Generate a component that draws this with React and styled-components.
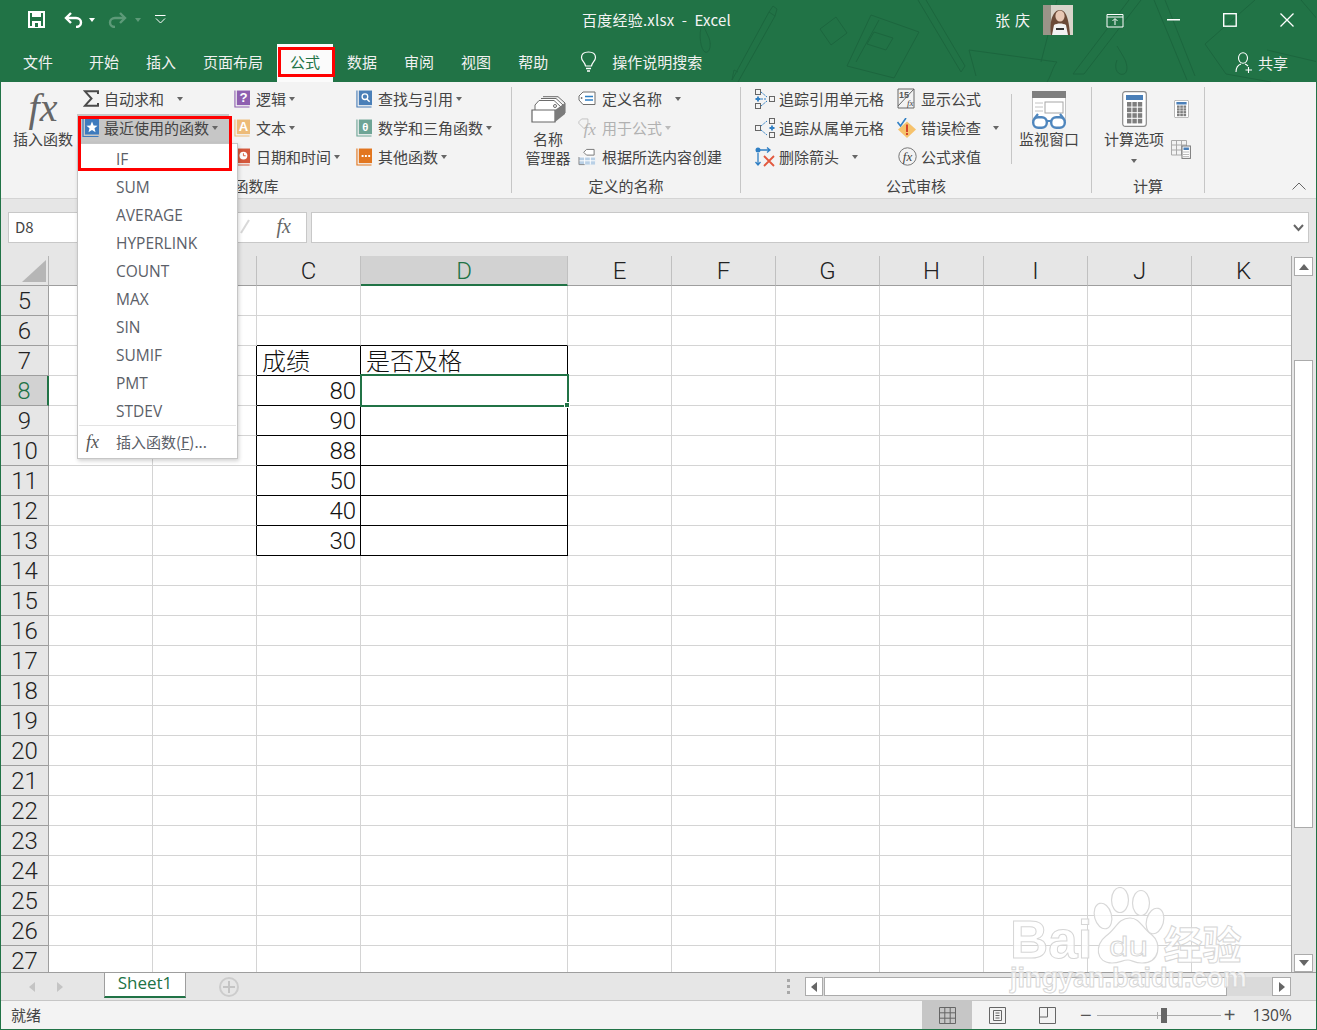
import React from "react";
import styled, { createGlobalStyle } from "styled-components";

const UI = `"Noto Sans CJK SC", "Noto Sans", sans-serif`;
const SHEETFONT = `Roboto, "Noto Sans CJK SC", sans-serif`;
const GREEN = "#217346";
const COLS = "48px 104px 104px 104px 207px 104px 104px 104px 104px 104px 104px 104px";

const Global = createGlobalStyle`
  html, body { margin: 0; padding: 0; background: #fff; }
  * { box-sizing: border-box; }
  #root { width: 1317px; height: 1030px; }
`;

const Window = styled.div`
  position: relative; width: 1317px; height: 1030px; overflow: hidden;
  display: flex; flex-direction: column;
  border-left: 1px solid ${GREEN}; border-right: 1px solid ${GREEN}; border-bottom: 1px solid ${GREEN};
  font-family: ${UI}; color: #444; background: #e6e6e6;
`;
const Header = styled.header`position: relative; height: 82px; flex: none; background: ${GREEN}; color: #fff;`;
const Doodles = styled.svg`position: absolute; left: 0; top: 0; pointer-events: none;`;
const TitleBar = styled.div`
  position: relative; height: 44px; display: grid; grid-template-columns: 1fr auto 1fr; padding-bottom: 5px; align-items: center;
`;
const Qat = styled.div`display: flex; align-items: center; padding-left: 27px;`;
const QatItem = styled.span`display: inline-flex; align-items: center; margin-left: ${p => p.$ml || 0}px;`;
const Caret = styled.i`
  display: inline-block; flex: none; width: 0; height: 0; margin-left: ${p => p.$ml ?? 3}px; margin-top: ${p => p.$mt || 0}px;
  border-left: 3.5px solid transparent; border-right: 3.5px solid transparent;
  border-top: 4px solid ${p => p.$c || "#666"};
`;
const Title = styled.div`font-size: 15px; line-height: 20px; color: #f4f4f4; white-space: pre; letter-spacing: .25px; margin-left: -4px;`;
const Controls = styled.div`display: flex; align-items: center; justify-content: flex-end;`;
const UserName = styled.span`font-size: 15px; letter-spacing: 5px; line-height: 20px; margin-right: 8px; color: #f4f4f4;`;
const Ctl = styled.span`display: inline-flex; justify-content: center; width: ${p => p.$w}px; margin-left: ${p => p.$ml || 0}px;`;
const TabBar = styled.nav`position: relative; height: 38px; display: flex; align-items: stretch; padding-left: 9px; gap: 1px;`;
const Tab = styled.div`
  padding: 0 13px; font-size: 15px; line-height: 36px; margin-right: ${p => p.$mr || 0}px;
  color: ${p => (p.$active ? GREEN : "#f1f1f1")}; background: ${p => (p.$active ? "#fbfbfb" : "transparent")};
`;
const Search = styled.div`display: flex; align-items: center; gap: 15px; margin-left: 18px; font-size: 15px; color: #f1f1f1; height: 35px;`;
const Share = styled.div`display: flex; align-items: center; gap: 5px; margin-left: auto; padding-right: 28px; font-size: 15px; height: 37px; color: #f1f1f1;`;

const Ribbon = styled.section`display: flex; flex: none; height: 117px; padding-top: 3px; background: #f3f3f3; border-bottom: 1px solid #d4d4d4;`;
const Group = styled.div`display: flex; flex-direction: column; width: ${p => p.$w}px; flex: none;`;
const GroupBody = styled.div`display: flex; height: 90px; padding-left: ${p => p.$pl || 0}px;`;
const GroupLabel = styled.div`font-size: 15px; line-height: 20px; text-align: center; margin-top: 1px; white-space: nowrap;`;
const Divider = styled.div`flex: none; width: 1px; height: ${p => p.$h || 106}px; margin-top: ${p => p.$mt || 2}px; background: #c6c6c6;`;
const Column = styled.div`display: flex; flex-direction: column; flex: none; width: ${p => p.$w}px;`;
const Item = styled.div`
  display: flex; align-items: center; height: 29px; padding-left: ${p => p.$pl ?? 5}px; padding-bottom: 2px;
  background: ${p => (p.$active ? "#c6c6c6" : "transparent")};
  color: ${p => (p.$off ? "#b1b1b1" : "#444")}; font-size: 15px; white-space: nowrap;
`;
const IconBox = styled.span`display: inline-flex; justify-content: center; align-items: center; flex: none; width: ${p => p.$w || 17}px; margin-right: ${p => p.$g ?? 5}px;`;
const BigButton = styled.div`
  display: flex; flex-direction: column; align-items: center; flex: none; width: ${p => p.$w}px;
  font-size: 15px; line-height: 19px; text-align: center; color: #444;
`;
const BigIcon = styled.div`height: 44px; padding-top: ${p => p.$pt || 0}px; display: flex; align-items: center; justify-content: center; flex: none;`;
const FxGlyph = styled.span`
  font-family: "Liberation Serif", serif; font-style: italic; color: ${p => p.$c || "#666"};
  font-size: ${p => p.$s}px; line-height: 1; letter-spacing: ${p => p.$ls || 0}px;
`;
const SmallCol = styled.div`display: flex; flex-direction: column; align-items: center; flex: none; width: ${p => p.$w}px; padding-top: ${p => p.$pt}px; gap: ${p => p.$g}px;`;
const Collapse = styled.div`margin-left: auto; margin-right: 10px; align-self: flex-end; margin-bottom: 3px;`;

const FormulaBar = styled.div`flex: none; height: 57px; display: flex; padding: 13px 7px 0 7px; gap: 4px;`;
const Field = styled.div`
  height: 31px; background: #fff; border: 1px solid #c8c8c8; display: flex; align-items: center;
  width: ${p => p.$w ? p.$w + "px" : "auto"}; flex: ${p => (p.$w ? "none" : 1)};
`;
const NameBox = styled(Field)`padding: 0 0 3px 6px; font-size: 15px; color: #444;`;
const FxBox = styled(Field)`justify-content: flex-end; padding: 0 15px 3px 0; gap: 27px;`;
const FormulaInput = styled(Field)`justify-content: flex-end; padding-right: 4px;`;

const Sheet = styled.div`flex: 1; display: flex; min-height: 0;`;
const GridPane = styled.div`width: 1291px; flex: none; overflow: hidden; background: #fff; border-right: 1px solid #a8a8a8;`;
const ColHeadRow = styled.div`display: grid; grid-template-columns: ${COLS}; grid-template-rows: 30px; height: 30px; background: #e6e6e6;`;
const Corner = styled.div`display: flex; align-items: flex-end; justify-content: flex-end; padding: 0 2px 3px 0; border-right: 1px solid #b5b5b5; border-bottom: 1px solid #9e9e9e;`;
const ColHead = styled.div`
  text-align: center; font-family: ${SHEETFONT}; font-size: 24px; line-height: 27px; padding-top: 2px; font-weight: 300; overflow: hidden;
  color: ${p => (p.$sel ? GREEN : "#222")}; background: ${p => (p.$sel ? "#d2d2d2" : "#e6e6e6")};
  border-right: 1px solid #c0c0c0;
  border-bottom: ${p => (p.$sel ? `2px solid ${GREEN}` : "1px solid #9e9e9e")};
`;
const Row = styled.div`display: grid; grid-template-columns: ${COLS}; grid-template-rows: 30px; height: 30px;`;
const RowHead = styled.div`
  text-align: center; font-family: ${SHEETFONT}; font-size: 24px; line-height: 27px; padding-top: 2px; font-weight: 300;
  color: ${p => (p.$sel ? GREEN : "#222")}; background: ${p => (p.$sel ? "#d2d2d2" : "#e6e6e6")};
  border-right: ${p => (p.$sel ? `2px solid ${GREEN}` : "1px solid #9e9e9e")};
  border-bottom: 1px solid #9e9e9e;
`;
const Cell = styled.div`
  position: relative; font-family: ${p => (p.$num ? SHEETFONT : UI)}; font-size: 24px; line-height: 27px; color: #111; font-weight: 300; white-space: nowrap;
  padding: ${p => (p.$num ? 2 : 0)}px 4px 0 5px; text-align: ${p => (p.$num ? "right" : "left")};
  border-right: 1px solid ${p => (p.$rb ? "#000" : "#d4d4d4")};
  border-bottom: 1px solid ${p => (p.$bb ? "#000" : "#d4d4d4")};
`;
const Selection = styled.div`position: absolute; left: -1px; right: -2px; top: -2px; bottom: -2px; border: 2px solid ${GREEN}; z-index: 2;`;
const Handle = styled.div`position: absolute; right: -3px; bottom: -3px; width: 6px; height: 6px; background: ${GREEN}; border: 1px solid #fff;`;

const VScroll = styled.div`flex: 1; display: flex; flex-direction: column; padding: 1px 3px 0 2px; background: #e6e6e6;`;
const ScrollBtn = styled.div`
  flex: none; display: flex; align-items: center; justify-content: center; background: #fff; border: 1px solid #ababab;
  width: ${p => p.$w}px; height: ${p => p.$h}px; margin-top: ${p => p.$mt || 0}px; margin-left: ${p => p.$ml || 0}px;
`;
const VThumb = styled.div`flex: none; height: 468px; margin-top: 84px; background: #fff; border: 1px solid #ababab; width: 19px;`;
const Tri = styled.i`
  width: 0; height: 0;
  ${p => p.$d === "up" && "border-left:5px solid transparent;border-right:5px solid transparent;border-bottom:6px solid #666;"}
  ${p => p.$d === "down" && "border-left:5px solid transparent;border-right:5px solid transparent;border-top:6px solid #666;"}
  ${p => p.$d === "left" && `border-top:5px solid transparent;border-bottom:5px solid transparent;border-right:6px solid ${p.$c || "#666"};`}
  ${p => p.$d === "right" && `border-top:5px solid transparent;border-bottom:5px solid transparent;border-left:6px solid ${p.$c || "#666"};`}
`;

const SheetBar = styled.div`flex: none; height: 29px; display: flex; align-items: flex-start; background: #e6e6e6; border-top: 1px solid #9e9e9e; border-bottom: 1px solid #c6c6c6;`;
const SheetNav = styled.div`width: 103px; height: 27px; flex: none; display: flex; align-items: center; gap: 22px; padding-left: 28px;`;
const SheetTab = styled.div`
  flex: none; width: 82px; height: 25px; background: #fff; color: ${GREEN}; font-size: 17px; line-height: 19px; text-align: center;
  border-left: 1px solid #9e9e9e; border-right: 1px solid #9e9e9e; border-bottom: 2px solid ${GREEN};
  font-family: "Open Sans", ${UI};
`;
const AddSheet = styled.div`
  flex: none; width: 20px; height: 20px; margin: 4px 0 0 33px; border-radius: 50%; border: 2px solid #ccc;
  color: #c4c4c4; display: flex; align-items: center; justify-content: center;
`;
const Dots = styled.div`margin: 6px 0 0 auto; display: flex; flex-direction: column; gap: 3px;`;
const Dot = styled.i`width: 3px; height: 3px; background: #a8a8a8;`;
const HScroll = styled.div`flex: none; width: 486px; height: 19px; margin: 4px 25px 0 15px; display: flex; background: #dadada;`;
const HThumb = styled.div`width: 403px; height: 19px; margin-left: 1px; background: #fff; border: 1px solid #ababab; flex: none;`;

const StatusBar = styled.footer`flex: none; height: 28px; display: flex; align-items: center; background: #f3f3f3; padding-left: 10px; font-size: 15px; color: #444;`;
const StatusText = styled.span`padding-bottom: 2px;`;
const ViewBtn = styled.div`
  flex: none; width: 50px; height: 28px; display: flex; align-items: center; justify-content: center;
  background: ${p => (p.$active ? "#c6c6c6" : "transparent")}; margin-left: ${p => p.$ml || 0}px;
`;
const ZoomSign = styled.span`font-family: "Liberation Sans", sans-serif; font-size: 20px; font-weight: 300; color: #555; line-height: 20px; margin-left: ${p => p.$ml}px;`;
const Slider = styled.div`position: relative; flex: none; width: 124px; height: 1px; background: #aaa; margin-left: 5px;`;
const SliderThumb = styled.i`position: absolute; left: 64px; top: -7px; width: 6px; height: 15px; background: #666;`;
const SliderTick = styled.i`position: absolute; left: 60px; top: -3px; width: 1px; height: 7px; background: #aaa;`;
const ZoomText = styled.span`font-family: "Open Sans", sans-serif; font-size: 15.5px; color: #444; margin-left: 17px;`;

const Menu = styled.div`
  position: absolute; left: 76px; top: 143px; width: 161px; height: 316px; z-index: 5; background: #fff;
  border: 1px solid #c6c6c6; box-shadow: 1px 2px 4px rgba(0,0,0,.18); padding-top: 1px;
`;
const MenuItem = styled.div`height: 28px; padding-left: 38px; font-family: "Open Sans", sans-serif; font-size: 15.5px; line-height: 28px; color: #5b6068;`;
const MenuSep = styled.div`height: 1px; background: #e3e3e3; margin: 0 1px;`;
const MenuFoot = styled.div`display: flex; align-items: center; height: 32px; padding: 0 0 2px 8px; font-size: 15px; color: #5b6068; white-space: nowrap;`;
const FootIcon = styled.span`width: 30px; flex: none;`;
const Red = styled.div`
  position: absolute; z-index: 8; border: 3px solid #f00;
  left: ${p => p.$x}px; top: ${p => p.$y}px; width: ${p => p.$w}px; height: ${p => p.$h}px;
`;

const Watermark = styled.div`position: absolute; left: 1009px; top: 887px; z-index: 6; width: 240px; pointer-events: none;`;
const MarkTop = styled.div`display: flex; align-items: flex-end; height: 78px;`;
const MarkWord = styled.span`
  font-family: "Liberation Sans", sans-serif; font-weight: 700; font-size: ${p => p.$s}px; line-height: 1; display: block;
  color: rgba(255,255,255,.72); -webkit-text-stroke: 1px #d6d6d6;
  margin-bottom: ${p => p.$mb || 0}px; white-space: nowrap;
`;
const MarkCn = styled(MarkWord)`font-family: "Noto Sans CJK SC", sans-serif; margin-left: -5px;`;

const Doodle = () => (
  <Doodles width="1317" height="82" fill="none" stroke="#1c663e" strokeWidth="1">
    <path d="M731 80L768 12L774 16L737 82M731 80L733 70L737 72M768 12L772 6L776 9L774 16" />
    <path d="M701 24C697 35 700 50 704 52C708 54 711 46 708 38L703 27" />
    <path d="M819 29L835 17L846 33L830 45Z" />
    <path d="M846 66L870 15L918 32L893 78ZM855 62L878 20M873 32L892 38L885 50L866 44Z" />
    <path d="M917 0L960 72L964 66L925 0" />
    <path d="M968 50L1056 62C1052 66 1050 76 1046 82M1056 0L1040 62M968 50L975 76" />
    <path d="M1075 70L1128 0M1083 74L1140 0M1075 70L1072 74L1083 74" />
    <path d="M1116 60C1112 70 1118 76 1123 74C1128 72 1126 62 1122 56L1116 46" />
    <path d="M1153 0L1186 80M1164 0L1194 76" />
    <path d="M1204 44L1254 0M1204 44L1225 74L1270 82M1300 0L1317 20M1266 50L1317 62" />
  </Doodles>
);

const SaveIcon = () => (
  <svg width="17" height="17" viewBox="0 0 17 17" fill="none">
    <path d="M1 1H16V16H1Z" stroke="#fff" strokeWidth="2" />
    <rect x="4" y="1" width="9" height="5" fill="#fff" />
    <rect x="4" y="10" width="9" height="6" fill="#fff" />
    <rect x="7" y="12" width="3" height="4" fill={GREEN} />
  </svg>
);
const UndoIcon = ({ c, flip }) => (
  <svg width="19" height="16" viewBox="0 0 19 16" fill="none" style={flip ? { transform: "scaleX(-1)" } : undefined}>
    <path d="M3 6H12C15 6 17 8 17 10.5C17 13 15 15 12 15" stroke={c} strokeWidth="2.4" />
    <path d="M7 1L2 6L7 11" stroke={c} strokeWidth="2.4" />
  </svg>
);
const CustomizeIcon = () => (
  <svg width="11" height="9" viewBox="0 0 11 9" fill="none" stroke="#fff"><path d="M0 .5H10.5" /><path d="M1 3.5L5.5 8L10 3.5" /></svg>
);
const Avatar = () => (
  <svg width="30" height="30" viewBox="0 0 30 30">
    <rect width="30" height="30" fill="#d9d4ca" />
    <rect width="8" height="30" fill="#9a9488" />
    <path d="M8 30C6 16 10 5 17 5C24 5 26 17 27 30H8Z" fill="#6b4a38" />
    <ellipse cx="17" cy="11" rx="4.6" ry="5.6" fill="#e8c8b4" />
    <path d="M9 30L11 20C14 18 20 18 23 20L25 30Z" fill="#f2f2f2" />
    <rect x="13" y="23" width="8" height="2" fill="#333" />
  </svg>
);
const RibbonDisp = () => (
  <svg width="18" height="16" viewBox="0 0 18 16" fill="none" stroke="#fff"><path d="M1 2.5H17V15H1ZM1 5H17" /><path d="M9 13V7M6.5 9L9 6.5L11.5 9" /></svg>
);
const MinIcon = () => <svg width="13" height="2"><rect width="13" height="1.5" fill="#fff" /></svg>;
const MaxIcon = () => <svg width="14" height="14" fill="none" stroke="#fff"><rect x=".7" y=".7" width="12.5" height="12.5" strokeWidth="1.4" /></svg>;
const CloseIcon = () => <svg width="14" height="14" stroke="#fff" strokeWidth="1.3"><path d="M.5.5L13.5 13.5M13.5.5L.5 13.5" /></svg>;
const Bulb = () => (
  <svg width="17" height="22" viewBox="0 0 17 22" fill="none" stroke="#fff" strokeWidth="1.2">
    <path d="M5.5 15C5 11 1.5 10 1.5 6.5C1.5 3 4.5 1 8.5 1C12.5 1 15.5 3 15.5 6.5C15.5 10 12 11 11.5 15Z" />
    <path d="M6 17.5H11M7 20H10" strokeWidth="1.6" />
  </svg>
);
const Person = () => (
  <svg width="18" height="21" viewBox="0 0 18 21" fill="none" stroke="#fff" strokeWidth="1.1">
    <ellipse cx="8" cy="6" rx="4.5" ry="5.3" /><path d="M1 20C1 15 3 13 6 12M10 12C11 12.3 12 13 13 14" /><path d="M13.5 15V21M10.5 18H17" />
  </svg>
);
const Sigma = () => <svg width="16" height="17" viewBox="0 0 16 17" fill="none" stroke="#4a4a4a" strokeWidth="2"><path d="M15 4V1.3H2L8.5 8.5L2 15.7H15V13" /></svg>;
const Book = ({ c, children }) => (
  <svg width="17" height="20" viewBox="0 0 17 20" fill="none">
    <path d="M1 1V18.5H16.5" stroke={c} strokeWidth="1.2" />
    <rect x="3" y="1" width="14" height="15.5" fill={c} />
    {children}
  </svg>
);
const BookText = ({ children, y = 13.5, s = 14 }) => (
  <text x="10" y={y} fontFamily="Liberation Sans" fontWeight="700" fontSize={s} fill="#fff" textAnchor="middle">{children}</text>
);
const Tag = () => (
  <svg width="18" height="15" viewBox="0 0 18 15" fill="none">
    <path d="M5 1H17V13.5H5L1 9V5Z" stroke="#6f6f6f" fill="#fff" />
    <path d="M7 5.5H15M7 9H15" stroke="#2f7fc4" strokeWidth="1.3" /><circle cx="3.6" cy="7" r=".9" fill="#6f6f6f" />
  </svg>
);
const FxTag = () => (
  <svg width="20" height="21" viewBox="0 0 20 21" fill="none">
    <path d="M1 4L4 1H11V8L7 12L1 6Z" stroke="#bdbdbd" />
    <text x="6" y="19" fontFamily="Liberation Serif" fontStyle="italic" fontSize="19" fill="#b4b4b4">fx</text>
  </svg>
);
const FromSel = () => (
  <svg width="19" height="18" viewBox="0 0 19 18" fill="none">
    <path d="M6 4L9 1H17V7H9Z" stroke="#777" fill="#fff" />
    <rect x="1" y="9" width="17" height="8" fill="#b9d0e6" />
    <path d="M1 9H18M1 13H18M7 9V17M13 9V17" stroke="#fff" /><path d="M1 9V17H7" stroke="#8a8a8a" />
  </svg>
);
const NameMgr = () => (
  <svg width="35" height="27" viewBox="0 0 35 27" fill="none" stroke="#6c6c6c">
    <path d="M12 .7H27L34 7V17" />
    <path d="M10 2.5H25L32 9V19" fill="#fff" />
    <path d="M8 4.5H23L30 11V19H4V9Z" fill="#fff" />
    <circle cx="24" cy="10" r="1.5" />
    <path d="M1 14H24V26H1Z" fill="#fff" stroke="#666" strokeWidth="1.2" />
    <path d="M24 14L34 7V18L24 26Z" fill="#7b7b7b" stroke="none" />
  </svg>
);
const TraceP = () => (
  <svg width="20" height="20" viewBox="0 0 20 20" fill="none" stroke="#666">
    <rect x=".5" y=".5" width="5" height="5" /><rect x=".5" y="14.5" width="5" height="5" /><rect x="14.5" y="7.5" width="5" height="5" />
    <path d="M.5 10H5.5M3 7.5V12.5" stroke="#2f7fc4" strokeWidth="1.8" />
    <path d="M6 3L12 8M6 10H12M6 17L12 12" stroke="#2f7fc4" strokeDasharray="2 1" />
  </svg>
);
const TraceD = () => (
  <svg width="20" height="20" viewBox="0 0 20 20" fill="none" stroke="#666">
    <rect x="14.5" y=".5" width="5" height="5" /><rect x="14.5" y="14.5" width="5" height="5" /><rect x=".5" y="7.5" width="5" height="5" />
    <path d="M14.5 10H19.5M17 7.5V12.5" stroke="#2f7fc4" strokeWidth="1.8" />
    <path d="M6 8L12 3M6 12L12 17" stroke="#2f7fc4" strokeDasharray="2 1" />
  </svg>
);
const RemoveArrows = () => (
  <svg width="20" height="20" viewBox="0 0 20 20" fill="none">
    <circle cx="3" cy="3" r="2.5" fill="#2f7fc4" /><path d="M5 3H15M12 .5L15 3L12 5.5M3 6V18M.5 15L3 18L5.5 15" stroke="#2f7fc4" strokeWidth="1.3" />
    <path d="M9 9L19 19M19 9L9 19" stroke="#e2583e" strokeWidth="1.8" />
  </svg>
);
const ShowF = () => (
  <svg width="20" height="21" viewBox="0 0 20 21" fill="none">
    <path d="M1 1H17V20H1ZM1 18L17 1" stroke="#666" />
    <text x="2" y="10" fontFamily="Liberation Sans" fontSize="9" fontWeight="700" fill="#555">15</text>
    <text x="10" y="18" fontFamily="Liberation Serif" fontStyle="italic" fontSize="9" fill="#444">fx</text>
  </svg>
);
const ErrCheck = () => (
  <svg width="20" height="20" viewBox="0 0 20 20" fill="none">
    <path d="M10 3.5L19 11.5L10 20L1 11.5Z" fill="#f6c26c" />
    <path d="M.5 4L3.5 8L9 0" stroke="#2f7fc4" strokeWidth="1.6" />
    <rect x="9" y="6.5" width="2" height="7.5" fill="#d5432a" /><rect x="9" y="15" width="2" height="2" fill="#d5432a" />
  </svg>
);
const EvalF = () => (
  <svg width="19" height="19" viewBox="0 0 19 19" fill="none">
    <circle cx="9.5" cy="9.5" r="8.7" stroke="#777" />
    <text x="9.5" y="14" textAnchor="middle" fontFamily="Liberation Serif" fontStyle="italic" fontSize="13" fill="#444">fx</text>
  </svg>
);
const WatchWin = () => (
  <svg width="36" height="38" viewBox="0 0 36 38" fill="none">
    <rect x="1.5" y=".5" width="33" height="29" fill="#fff" stroke="#c4c4c4" /><rect x="1" y="0" width="34" height="7" fill="#7f7f7f" />
    <path d="M4 12H12M4 16H12M4 20H12" stroke="#c4c4c4" /><rect x="14" y="11" width="18" height="11" stroke="#a6a6a6" />
    <rect x="2.2" y="26.2" width="13.6" height="10.6" rx="5" stroke="#4f86bd" strokeWidth="2.4" fill="#fff" />
    <rect x="20.2" y="26.2" width="13.6" height="10.6" rx="5" stroke="#4f86bd" strokeWidth="2.4" fill="#fff" />
    <path d="M15 30H21M3 28L7 23M33 28L29 23" stroke="#4f86bd" strokeWidth="2.2" />
  </svg>
);
const Calc = ({ w = 25, h = 36 }) => {
  const cells = [];
  for (let r = 0; r < 4; r++) for (let c = 0; c < 3; c++) cells.push(<rect key={`${r}${c}`} x={5 + c * 5.4} y={11 + r * 5.6} width="4.4" height="4.6" fill="#7e7e7e" />);
  return (
    <svg width={w} height={h} viewBox="0 0 25 36" fill="none" preserveAspectRatio="none">
      <rect x=".7" y=".7" width="23.6" height="34.6" rx="2.5" fill="#fff" stroke="#8b8b8b" strokeWidth="1.2" />
      <rect x="4" y="4" width="17" height="5" fill="#4a7fb8" />{cells}
    </svg>
  );
};
const CalcSheet = () => (
  <svg width="20" height="19" viewBox="0 0 20 19" fill="none" stroke="#aaa">
    <path d="M.5.5H15.5V15H.5ZM.5 5H15.5M.5 10H15.5M5.5.5V15M10.5.5V15" />
    <rect x="11" y="6" width="8.4" height="12.4" fill="#fff" stroke="#777" /><rect x="12.5" y="7.5" width="5.4" height="2.5" fill="#4a7fb8" stroke="none" />
    <path d="M12.5 12H18M12.5 14.5H18M12.5 16.6H18" stroke="#777" strokeDasharray="1 1" />
  </svg>
);
const Chevron = ({ c = "#666" }) => <svg width="14" height="8" fill="none" stroke={c}><path d="M.5 7.5L7 1L13.5 7.5" /></svg>;
const FormulaCaret = () => <svg width="11" height="8" fill="none" stroke="#666" strokeWidth="2"><path d="M1 1L5.5 6L10 1" /></svg>;
const CheckMark = () => <svg width="10" height="15" fill="none" stroke="#d8d8d8" strokeWidth="2"><path d="M1 14L9 1" /></svg>;
const GridIcon = () => <svg width="17" height="17" fill="none" stroke="#666"><path d="M.5.5H16.5V16.5H.5ZM.5 5.8H16.5M.5 11.2H16.5M5.8.5V16.5M11.2.5V16.5" /></svg>;
const PageIcon = () => <svg width="17" height="17" fill="none" stroke="#666"><path d="M.5.5H16.5V16.5H.5Z" /><path d="M4.5 3.5H12.5V13.5H4.5ZM6.5 6H10.5M6.5 8.5H10.5M6.5 11H10.5" /></svg>;
const BreakIcon = () => <svg width="17" height="17" fill="none" stroke="#666"><path d="M.5.5H16.5V16.5H.5ZM.5 10H8.5V.5" /></svg>;
const CornerTri = () => <svg width="24" height="22"><path d="M24 0V22H0Z" fill="#b6b6b6" /></svg>;
const Plus = () => <svg width="12" height="12" stroke="#c4c4c4" strokeWidth="2"><path d="M6 0V12M0 6H12" /></svg>;
const Paw = () => (
  <svg width="76" height="78" viewBox="0 0 76 78" fill="rgba(255,255,255,.72)" stroke="#d8d8d8" strokeWidth="1.2">
    <ellipse cx="11" cy="29" rx="8.5" ry="13" transform="rotate(-15 11 29)" />
    <ellipse cx="28" cy="13" rx="8.5" ry="12.5" />
    <ellipse cx="49" cy="16" rx="8.5" ry="12.5" />
    <ellipse cx="63" cy="34" rx="8.5" ry="13" transform="rotate(15 63 34)" />
    <path d="M38 31C48 31 50 41 60 48C70 56 68 76 50 76C42 76 40 73 36 73C30 73 28 76 20 76C4 76 2 58 14 49C24 42 26 31 38 31Z" />
    <text x="17" y="69" textLength="39" lengthAdjust="spacingAndGlyphs" fontFamily="Liberation Sans" fontSize="27" fill="rgba(255,255,255,.8)" stroke="#d4d4d4" strokeWidth=".8">du</text>
  </svg>
);

const TABS = ["开始", "插入", "页面布局", "公式", "数据", "审阅", "视图", "帮助"];
const COLNAMES = ["A", "B", "C", "D", "E", "F", "G", "H", "I", "J", "K"];
const ROWS = Array.from({ length: 23 }, (_, i) => i + 5);
const DATA = { 7: ["成绩", "是否及格"], 8: ["80", ""], 9: ["90", ""], 10: ["88", ""], 11: ["50", ""], 12: ["40", ""], 13: ["30", ""] };
const FUNCS = ["IF", "SUM", "AVERAGE", "HYPERLINK", "COUNT", "MAX", "SIN", "SUMIF", "PMT", "STDEV"];

const RibbonItem = ({ icon, w, g, pl, text, caret, active, off }) => (
  <Item $pl={pl} $active={active} $off={off}>
    <IconBox $w={w} $g={g}>{icon}</IconBox>
    {text}
    {caret !== undefined && <Caret $ml={caret} $c={off ? "#bbb" : "#666"} />}
  </Item>
);

const SheetRow = ({ n }) => {
  const d = DATA[n];
  return (
    <Row>
      <RowHead $sel={n === 8}>{n}</RowHead>
      {COLNAMES.map((c) => {
        const inTable = n >= 7 && n <= 13;
        const inCols = c === "C" || c === "D";
        const rb = (inTable && inCols) || (c === "B" && inTable);
        const bb = inCols && n >= 6 && n <= 13;
        let content = null;
        if (d && c === "C") content = d[0];
        if (d && c === "D") content = d[1];
        return (
          <Cell key={c} $rb={rb} $bb={bb} $num={c === "C" && n > 7}>
            {content}
            {n === 8 && c === "D" && <Selection><Handle /></Selection>}
          </Cell>
        );
      })}
    </Row>
  );
};

export default function App() {
  return (
    <>
      <Global />
      <Window>
        <Header>
          <Doodle />
          <TitleBar>
            <Qat>
              <QatItem><SaveIcon /></QatItem>
              <QatItem $ml={19}><UndoIcon c="#fff" /><Caret $ml={6} $c="#fff" /></QatItem>
              <QatItem $ml={13}><UndoIcon c="#5d9a78" flip /><Caret $ml={8} $c="#5d9a78" /></QatItem>
              <QatItem $ml={14}><CustomizeIcon /></QatItem>
            </Qat>
            <Title>百度经验.xlsx  -  Excel</Title>
            <Controls>
              <UserName>张庆</UserName>
              <Avatar />
              <Ctl $w={18} $ml={33}><RibbonDisp /></Ctl>
              <Ctl $w={14} $ml={42}><MinIcon /></Ctl>
              <Ctl $w={16} $ml={42}><MaxIcon /></Ctl>
              <Ctl $w={14} $ml={42}><CloseIcon /></Ctl>
              <Ctl $w={22} />
            </Controls>
          </TitleBar>
          <TabBar>
            <Tab $mr={9}>文件</Tab>
            {TABS.map((t) => <Tab key={t} $active={t === "公式"}>{t}</Tab>)}
            <Search><Bulb />操作说明搜索</Search>
            <Share><Person />共享</Share>
          </TabBar>
        </Header>

        <Ribbon>
          <Group $w={510}>
            <GroupBody $pl={8}>
              <BigButton $w={68}>
                <BigIcon $pt={2}><FxGlyph $s={40}>fx</FxGlyph></BigIcon>
                插入函数
              </BigButton>
              <Column $w={152}>
                <RibbonItem icon={<Sigma />} text="自动求和" caret={13} />
                <RibbonItem active icon={<Book c="#3f7bbd"><polygon points="10,3.5 11.6,7.5 15.5,7.8 12.5,10.3 13.5,14.3 10,12 6.5,14.3 7.5,10.3 4.5,7.8 8.4,7.5" fill="#fff" /></Book>} text="最近使用的函数" caret={3} />
              </Column>
              <Column $w={122}>
                <RibbonItem w={16} g={6} icon={<Book c="#8e5fb0"><BookText>?</BookText></Book>} text="逻辑" caret={3} />
                <RibbonItem w={16} g={6} icon={<Book c="#edbb78"><BookText>A</BookText></Book>} text="文本" caret={3} />
                <RibbonItem w={16} g={6} icon={<Book c="#d4583c"><circle cx="10" cy="8.5" r="4.2" fill="#fff" /><path d="M10 6V8.7H12.4" stroke="#d4583c" /></Book>} text="日期和时间" caret={3} />
              </Column>
              <Column $w={154}>
                <RibbonItem w={16} g={6} icon={<Book c="#4a7fb8"><circle cx="9.5" cy="7.5" r="3" stroke="#fff" strokeWidth="1.4" /><path d="M11.5 10L14.5 13" stroke="#fff" strokeWidth="1.6" /></Book>} text="查找与引用" caret={3} />
                <RibbonItem w={16} g={6} icon={<Book c="#6ea596"><BookText s={12}>θ</BookText></Book>} text="数学和三角函数" caret={3} />
                <RibbonItem w={16} g={6} icon={<Book c="#e2761f"><path d="M6 9H8M9.5 9H11.5M13 9H15" stroke="#fff" strokeWidth="2" /></Book>} text="其他函数" caret={3} />
              </Column>
            </GroupBody>
            <GroupLabel>函数库</GroupLabel>
          </Group>
          <Divider />
          <Group $w={228}>
            <GroupBody $pl={8}>
              <BigButton $w={56}>
                <BigIcon $pt={5}><NameMgr /></BigIcon>
                <span>名称</span><span>管理器</span>
              </BigButton>
              <Column $w={160}>
                <RibbonItem pl={2} w={18} g={6} icon={<Tag />} text="定义名称" caret={13} />
                <RibbonItem pl={2} w={18} g={6} off icon={<FxTag />} text="用于公式" caret={3} />
                <RibbonItem pl={2} w={18} g={6} icon={<FromSel />} text="根据所选内容创建" />
              </Column>
            </GroupBody>
            <GroupLabel>定义的名称</GroupLabel>
          </Group>
          <Divider />
          <Group $w={350}>
            <GroupBody $pl={14}>
              <Column $w={142}>
                <RibbonItem pl={0} w={20} g={4} icon={<TraceP />} text="追踪引用单元格" />
                <RibbonItem pl={0} w={20} g={4} icon={<TraceD />} text="追踪从属单元格" />
                <RibbonItem pl={0} w={20} g={4} icon={<RemoveArrows />} text="删除箭头" caret={13} />
              </Column>
              <Column $w={114}>
                <RibbonItem pl={0} w={20} g={4} icon={<ShowF />} text="显示公式" />
                <RibbonItem pl={0} w={20} g={4} icon={<ErrCheck />} text="错误检查" caret={12} />
                <RibbonItem pl={0} w={20} g={4} icon={<EvalF />} text="公式求值" />
              </Column>
              <Divider $h={70} $mt={9} />
              <BigButton $w={74}>
                <BigIcon $pt={6}><WatchWin /></BigIcon>
                监视窗口
              </BigButton>
            </GroupBody>
            <GroupLabel>公式审核</GroupLabel>
          </Group>
          <Divider />
          <Group $w={112}>
            <GroupBody $pl={8}>
              <BigButton $w={68}>
                <BigIcon $pt={4}><Calc /></BigIcon>
                计算选项
                <Caret $ml={0} $mt={11} />
              </BigButton>
              <SmallCol $w={26} $pt={15} $g={22}>
                <Calc w={15} h={18} />
                <CalcSheet />
              </SmallCol>
            </GroupBody>
            <GroupLabel>计算</GroupLabel>
          </Group>
          <Divider />
          <Collapse><Chevron /></Collapse>
        </Ribbon>

        <FormulaBar>
          <NameBox $w={190}>D8</NameBox>
          <FxBox $w={105}><CheckMark /><FxGlyph $s={20} $c="#666">fx</FxGlyph></FxBox>
          <FormulaInput><FormulaCaret /></FormulaInput>
        </FormulaBar>

        <Sheet>
          <GridPane>
            <ColHeadRow>
              <Corner><CornerTri /></Corner>
              {COLNAMES.map((c) => <ColHead key={c} $sel={c === "D"}>{c}</ColHead>)}
            </ColHeadRow>
            {ROWS.map((n) => <SheetRow key={n} n={n} />)}
          </GridPane>
          <VScroll>
            <ScrollBtn $w={19} $h={19}><Tri $d="up" /></ScrollBtn>
            <VThumb />
            <ScrollBtn $w={19} $h={18} $mt={126}><Tri $d="down" /></ScrollBtn>
          </VScroll>
        </Sheet>

        <SheetBar>
          <SheetNav><Tri $d="left" $c="#c4c4c4" /><Tri $d="right" $c="#c4c4c4" /></SheetNav>
          <SheetTab>Sheet1</SheetTab>
          <AddSheet><Plus /></AddSheet>
          <Dots><Dot /><Dot /><Dot /></Dots>
          <HScroll>
            <ScrollBtn $w={18} $h={19}><Tri $d="left" /></ScrollBtn>
            <HThumb />
            <ScrollBtn $w={19} $h={19} $ml={45}><Tri $d="right" /></ScrollBtn>
          </HScroll>
        </SheetBar>

        <StatusBar>
          <StatusText>就绪</StatusText>
          <ViewBtn $active $ml={881}><GridIcon /></ViewBtn>
          <ViewBtn><PageIcon /></ViewBtn>
          <ViewBtn><BreakIcon /></ViewBtn>
          <ZoomSign $ml={8}>−</ZoomSign>
          <Slider><SliderTick /><SliderThumb /></Slider>
          <ZoomSign $ml={3}>+</ZoomSign>
          <ZoomText>130%</ZoomText>
        </StatusBar>

        <Menu>
          {FUNCS.map((f) => <MenuItem key={f}>{f}</MenuItem>)}
          <MenuSep />
          <MenuFoot><FootIcon><FxGlyph $s={18} $c="#555">fx</FxGlyph></FootIcon>插入函数(<u>F</u>)...</MenuFoot>
        </Menu>

        <Red $x={277} $y={47} $w={57} $h={30} />
        <Red $x={77} $y={116} $w={154} $h={55} />

        <Watermark>
          <MarkTop>
            <MarkWord $s={53} $mb={-1}>Bai</MarkWord>
            <Paw />
            <MarkCn $s={39} $mb={3}>经验</MarkCn>
          </MarkTop>
          <MarkWord $s={27}>jingyan.baidu.com</MarkWord>
        </Watermark>
      </Window>
    </>
  );
}
